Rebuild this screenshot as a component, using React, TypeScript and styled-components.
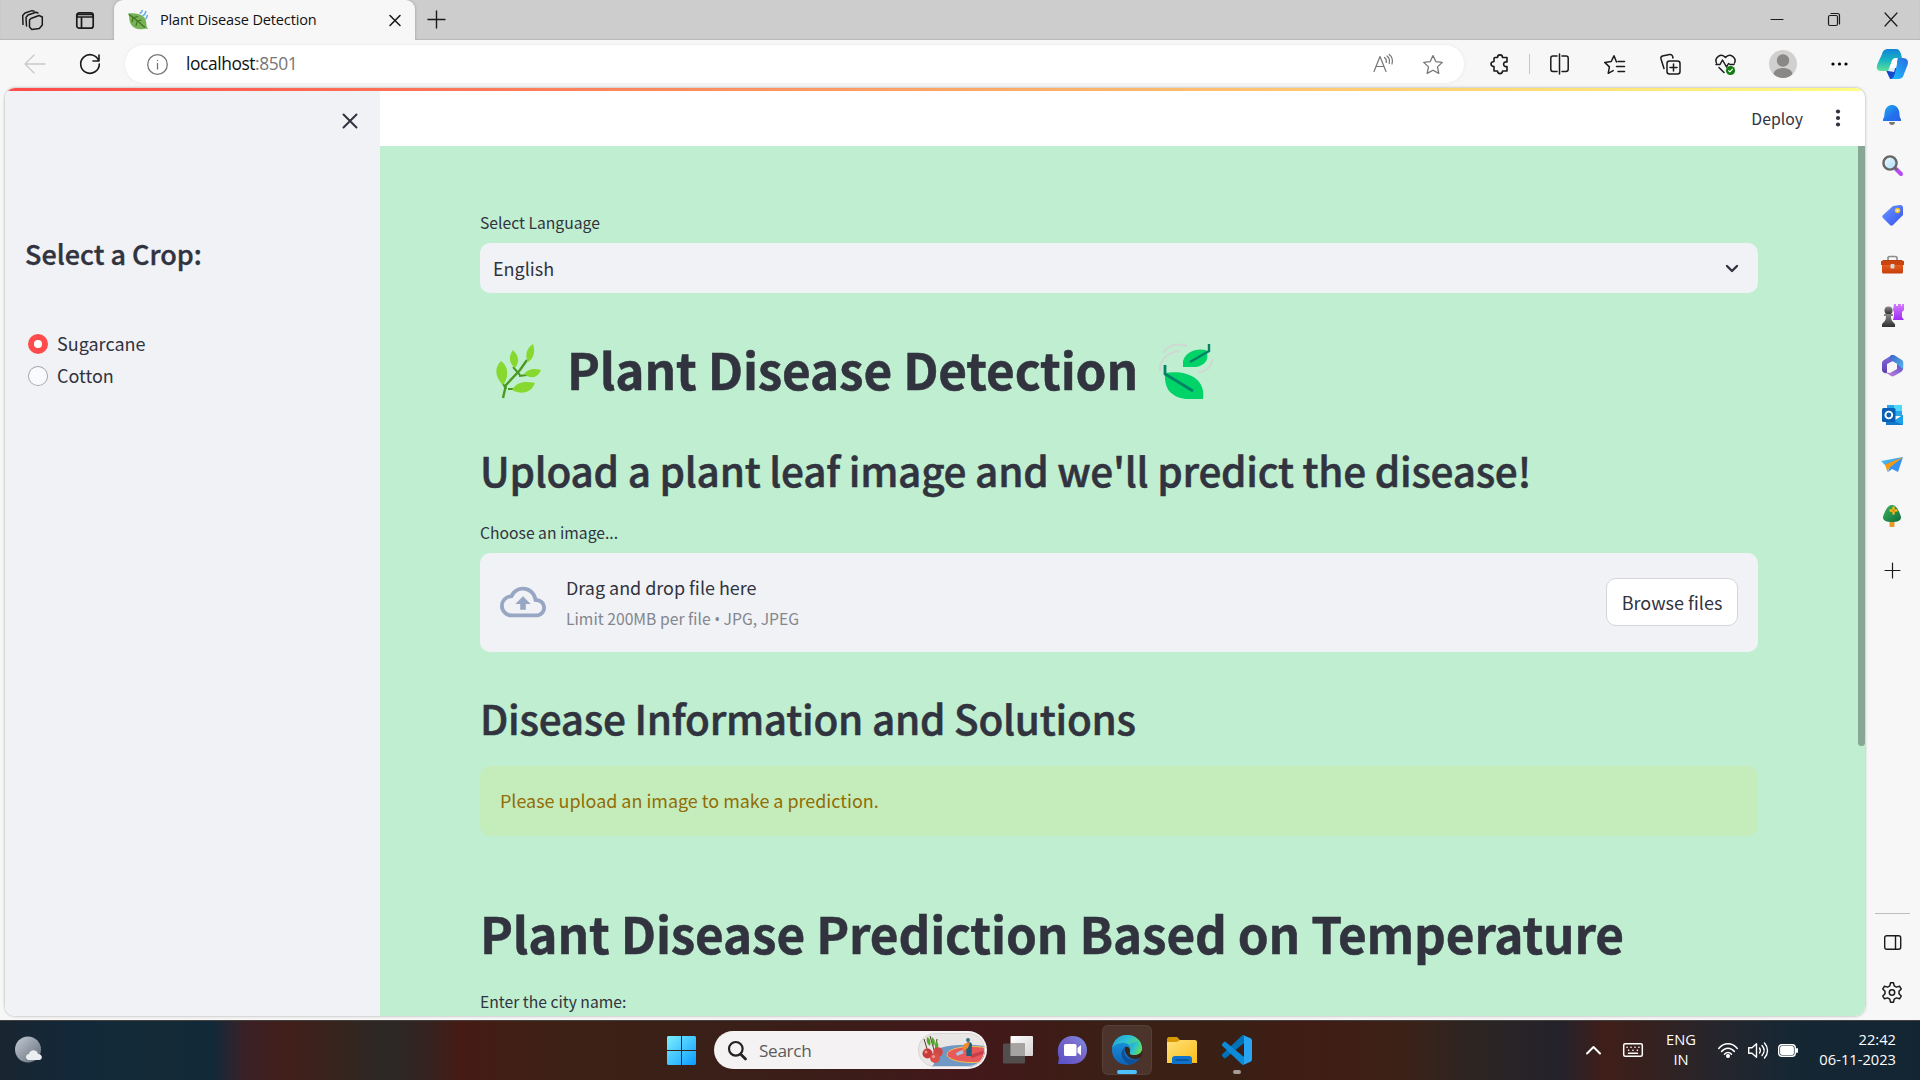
import React from "react";
import styled, { createGlobalStyle } from "styled-components";

const page = `"Noto Sans CJK SC", "Noto Sans CJK JP", sans-serif`;
const system = `"Open Sans", "Noto Sans", sans-serif`;
const ink = "#31333f";

const Global = createGlobalStyle`
  *, *::before, *::after { box-sizing: border-box; }
  html, body { margin: 0; padding: 0; overflow: hidden; }
  h1, h2, p { margin: 0; }
  svg { display: block; flex: none; overflow: visible; }
`;

const Desktop = styled.div`
  width: 1920px;
  height: 1080px;
  display: flex;
  flex-direction: column;
  overflow: hidden;
  background: #f7f7f7;
  font-family: ${system};
  color: #1b1b1b;
`;

/* ---------- browser chrome ---------- */
const TabStrip = styled.header`
  height: 40px;
  flex: none;
  display: flex;
  background: #cdcdcd;
  box-shadow: inset 0 -1px 1px #b9b9b9;
`;
const Slot = styled.div<{ $w: number; $up?: number }>`
  width: ${(p) => p.$w}px;
  flex: none;
  display: flex;
  align-items: center;
  justify-content: center;
  padding-bottom: ${(p) => p.$up || 0}px;
`;
const Tab = styled.div`
  width: 301px;
  flex: none;
  display: flex;
  align-items: center;
  padding: 0 11px 1px 14px;
  background: #f7f7f7;
  border-radius: 9px 9px 0 0;
  box-shadow: 0 0 3px rgba(0, 0, 0, 0.25);
  clip-path: inset(0 -4px 0 -4px);
`;
const TabTitle = styled.span`
  flex: 1;
  margin-left: 12px;
  font-size: 14.5px;
  letter-spacing: -0.14px;
  line-height: 20px;
  white-space: nowrap;
  color: #111;
`;
const Spacer = styled.div`
  flex: 1;
`;
const Toolbar = styled.div`
  height: 48px;
  flex: none;
  display: flex;
  align-items: center;
`;
const Omnibox = styled.div`
  width: 1339px;
  height: 38px;
  flex: none;
  display: flex;
  align-items: center;
  padding-left: 22px;
  margin-right: 8px;
  border-radius: 19px;
  background: #fff;
  box-shadow: 0 0 4px rgba(0, 0, 0, 0.06);
`;
const Url = styled.span`
  margin-left: 18px;
  padding-bottom: 2px;
  font-size: 17.4px;
  letter-spacing: -0.42px;
  line-height: 24px;
  color: #111;
  span { color: #767676; }
`;
const Divider = styled.div`
  width: 1px;
  height: 20px;
  background: #c8c8c8;
`;

/* ---------- body ---------- */
const Body = styled.div`
  height: 932px;
  flex: none;
  display: flex;
`;
const FrameShadow = styled.div`
  flex: none;
  width: 1860px;
  height: 928px;
  margin-left: 5px;
  border-radius: 10px;
  box-shadow: 0 0 3px rgba(0, 0, 0, 0.35);
`;
const Frame = styled.div`
  height: 928px;
  display: flex;
  flex-direction: column;
  overflow: hidden;
  border-radius: 10px;
  background: #fff;
  font-family: ${page};
  color: ${ink};
`;
const Rainbow = styled.div`
  height: 3px;
  flex: none;
  background: linear-gradient(90deg, #ff4b4b, #fffd80);
`;
const View = styled.div`
  flex: 1;
  min-height: 0;
  display: flex;
`;
const Sidebar = styled.aside`
  width: 375px;
  flex: none;
  display: flex;
  flex-direction: column;
  background: #f0f2f6;
`;
const SideTop = styled.div`
  height: 59px;
  display: flex;
  justify-content: flex-end;
  align-items: center;
  padding-right: 22px;
`;
const SideBody = styled.div`
  padding: 84px 20px 0 20px;
  display: flex;
  flex-direction: column;
`;
const SideTitle = styled.h2`
  font-size: 27px;
  font-weight: 500;
  line-height: 40px;
  margin-bottom: 54px;
  white-space: nowrap;
  -webkit-text-stroke: 0.35px ${ink};
`;
const RadioRow = styled.label`
  height: 32px;
  display: flex;
  align-items: center;
  gap: 9px;
  padding-left: 3px;
  font-size: 18px;
  line-height: 28px;
  span:last-child { padding-bottom: 2px; }
`;
const Radio = styled.span<{ $on?: boolean }>`
  width: 20px;
  height: 20px;
  border-radius: 50%;
  display: grid;
  place-items: center;
  background: ${(p) => (p.$on ? "#ff4b4b" : "#a0a2ab")};
  &::after {
    content: "";
    border-radius: 50%;
    width: ${(p) => (p.$on ? 7.5 : 17.5)}px;
    height: ${(p) => (p.$on ? 7.5 : 17.5)}px;
    background: ${(p) => (p.$on ? "#fff" : "#f9fafc")};
  }
`;
const Main = styled.main`
  flex: 1;
  min-width: 0;
  display: flex;
  flex-direction: column;
  background: #c0eed0;
`;
const Header = styled.div`
  height: 55px;
  flex: none;
  display: flex;
  justify-content: flex-end;
  align-items: center;
  padding: 0 22px 1px 0;
  background: #fff;
  font-size: 15.8px;
  svg { margin-left: 30px; }
`;
const Scroll = styled.div`
  flex: 1;
  min-height: 0;
  display: flex;
  justify-content: space-between;
  overflow: hidden;
`;
const Column = styled.div`
  width: 1278px;
  margin-left: 100px;
  padding-top: 62px;
  display: flex;
  flex-direction: column;
`;
const Thumb = styled.div`
  width: 7px;
  height: 600px;
  background: #87a694;
  border-radius: 0 0 4px 4px;
`;
const Label = styled.div<{ $top?: number }>`
  flex: none;
  height: 30px;
  margin: ${(p) => p.$top || 0}px 0 5px;
  font-size: 15.7px;
  line-height: 30px;
`;
const Select = styled.div`
  flex: none;
  height: 50px;
  display: flex;
  align-items: center;
  justify-content: space-between;
  padding: 0 17px 1px 13px;
  border-radius: 10px;
  background: #f0f2f6;
  font-size: 18px;
`;
const H1 = styled.h1<{ $top: number }>`
  flex: none;
  display: flex;
  align-items: center;
  height: 60px;
  margin-top: ${(p) => p.$top}px;
  font-size: 49.5px;
  font-weight: 700;
  line-height: 56px;
  letter-spacing: -0.16px;
  white-space: nowrap;
  -webkit-text-stroke: 0.5px ${ink};
`;
const HerbBox = styled.span`
  width: 61px;
  display: flex;
  justify-content: flex-end;
`;
const H1Text = styled.span<{ $inset?: boolean }>`
  margin: ${(p) => (p.$inset ? "0 21px 0 26px" : "0")};
  padding-bottom: 4px;
`;
const H2 = styled.h2<{ $top: number }>`
  flex: none;
  height: 60px;
  margin-top: ${(p) => p.$top}px;
  font-size: 40.5px;
  font-weight: 500;
  line-height: 56px;
  letter-spacing: -0.26px;
  white-space: nowrap;
  -webkit-text-stroke: 0.55px ${ink};
`;
const Uploader = styled.div`
  flex: none;
  height: 99px;
  display: flex;
  align-items: center;
  padding: 0 20px 2px;
  border-radius: 10px;
  background: #f0f2f6;
`;
const UploadText = styled.div`
  flex: 1;
  margin-left: 20px;
  padding-top: 2px;
  font-size: 17.95px;
  line-height: 32px;
  small {
    display: block;
    font-size: 15.72px;
    line-height: 31px;
    color: #84868e;
  }
`;
const Bullet = styled.span`
  font-family: "Open Sans", sans-serif;
`;
const Button = styled.button`
  width: 132px;
  height: 48px;
  padding: 0;
  border: 1px solid #d5d6d9;
  border-radius: 10px;
  background: #fff;
  font: 18px ${page};
  line-height: 44px;
  color: ${ink};
`;
const Alert = styled.div`
  flex: none;
  height: 70px;
  margin-top: 16px;
  padding: 0 20px;
  border-radius: 10px;
  background: #c5ecbb;
  color: #926c05;
  font-size: 17.93px;
  line-height: 69px;
`;

/* ---------- edge side rail ---------- */
const Rail = styled.nav`
  flex: 1;
  display: flex;
  flex-direction: column;
  align-items: center;
  padding: 2px 1px 6px 0;
`;
const RailItem = styled.div<{ $h?: number }>`
  flex: none;
  height: ${(p) => p.$h || 50.1}px;
  width: 50px;
  display: grid;
  place-items: center;
`;
const RailLine = styled.div`
  width: 35px;
  height: 1px;
  background: #bdbdbd;
`;

/* ---------- taskbar ---------- */
const Taskbar = styled.footer`
  height: 60px;
  flex: none;
  display: flex;
  align-items: center;
  padding-bottom: 1px;
  border-top: 1px solid #44413f;
  background: linear-gradient(
    90deg,
    #1a2530 0, #12293a 80px, #142b36 160px, #112a39 212px, #3a2026 245px,
    #421f1a 290px, #33261f 350px, #2c2826 390px, #332320 425px, #461b14 460px,
    #3e2015 540px, #3a2018 700px, #3c1c19 860px, #44181b 960px, #3f1a17 1030px,
    #3a2016 1120px, #3a1f15 1240px, #401c15 1300px, #3c2117 1400px, #2b2523 1480px,
    #24222b 1560px, #401e19 1605px, #35211f 1650px, #27252b 1710px, #162734 1790px, #122532 1920px
  );
  color: #fff;
`;
const Search = styled.div`
  width: 273px;
  height: 38px;
  margin: 0 16px 0 18px;
  flex: none;
  display: flex;
  align-items: center;
  padding: 0 2px 0 14px;
  border-radius: 19px;
  background: #f4f2f2;
  font-size: 17.2px;
  letter-spacing: -0.35px;
  color: #5b5b5b;
  span { flex: 1; margin-left: 13px; }
`;
const TaskView = styled.div`
  width: 30px;
  margin-right: 14px;
  flex: none;
`;
const AppTile = styled.div<{ $active?: boolean }>`
  width: 50px;
  height: 50px;
  margin-right: 5px;
  flex: none;
  display: grid;
  place-items: center;
  position: relative;
  border-radius: 6px;
  background: ${(p) => (p.$active ? "rgba(255,255,255,.09)" : "none")};
  box-shadow: ${(p) => (p.$active ? "inset 0 0 0 1px rgba(255,255,255,.06)" : "none")};
`;
const Mark = styled.i<{ $on?: boolean }>`
  position: absolute;
  bottom: 1px;
  left: 50%;
  transform: translateX(-50%);
  width: ${(p) => (p.$on ? 20 : 8)}px;
  height: 4px;
  border-radius: 2px;
  background: ${(p) => (p.$on ? "#4cc2ff" : "#a89b96")};
`;
const Stack = styled.div<{ $align: string; $w: number }>`
  width: ${(p) => p.$w}px;
  flex: none;
  padding-bottom: 2px;
  text-align: ${(p) => p.$align};
  font-size: 14.7px;
  line-height: 20px;
  white-space: nowrap;
`;

type IconProps = { w: number; h?: number; box?: string; sw?: number; color?: string; children: React.ReactNode };
const Line = ({ w, h, box, sw = 1.4, color = "#1b1b1b", children }: IconProps) => (
  <svg width={w} height={h || w} viewBox={box || `0 0 ${w} ${h || w}`} fill="none" stroke={color} strokeWidth={sw} strokeLinecap="round" strokeLinejoin="round">
    {children}
  </svg>
);
const Art = ({ w, h, box, children }: IconProps) => (
  <svg width={w} height={h || w} viewBox={box || `0 0 ${w} ${h || w}`}>{children}</svg>
);

const Defs = styled.svg`
  position: absolute;
`;
const Gradients = () => (
  <Defs width="0" height="0">
    <defs>
      <linearGradient id="bell" x1="0" y1="0" x2="1" y2="1"><stop stopColor="#1fb0ea" /><stop offset=".6" stopColor="#2270ee" /><stop offset="1" stopColor="#2a62e6" /></linearGradient>
      <linearGradient id="tag" x1="0" y1="0" x2="1" y2="1"><stop stopColor="#6d9bff" /><stop offset=".5" stopColor="#4f75fb" /><stop offset="1" stopColor="#3451e0" /></linearGradient>
      <linearGradient id="violet" x1="0" y1="0" x2="0" y2="1"><stop stopColor="#d37bff" /><stop offset="1" stopColor="#9d2cf5" /></linearGradient>
      <linearGradient id="grey" x1="0" y1="0" x2="0" y2="1"><stop stopColor="#8a8a8a" /><stop offset="1" stopColor="#2f2f2f" /></linearGradient>
      <linearGradient id="lens" x1="0" y1="0" x2="1" y2="1"><stop stopColor="#f1fbff" /><stop offset="1" stopColor="#a9dcfa" /></linearGradient>
      <linearGradient id="box" x1="0" y1="0" x2="0" y2="1"><stop stopColor="#b8380a" /><stop offset=".4" stopColor="#e65b1c" /><stop offset="1" stopColor="#c33f0f" /></linearGradient>
      <linearGradient id="plane" x1="0" y1="0" x2="1" y2="1"><stop stopColor="#55d4f5" /><stop offset="1" stopColor="#1f6fe8" /></linearGradient>
      <linearGradient id="tree" x1="0" y1="0" x2="1" y2="1"><stop stopColor="#3eb65a" /><stop offset="1" stopColor="#0d6b3c" /></linearGradient>
      <linearGradient id="cpA" x1="0" y1="0" x2="0" y2="1"><stop stopColor="#1183d8" /><stop offset=".5" stopColor="#17b4c0" /><stop offset="1" stopColor="#5fe09a" /></linearGradient>
      <linearGradient id="cpB" x1="1" y1="0" x2="0" y2="1"><stop stopColor="#2a6be0" /><stop offset="1" stopColor="#1cc2ff" /></linearGradient>
      <linearGradient id="cpC" x1="0" y1="0" x2="1" y2="1"><stop stopColor="#0b3fb8" /><stop offset="1" stopColor="#1b57e0" /></linearGradient>
      <linearGradient id="win" x1="0" y1="0" x2="1" y2="1"><stop stopColor="#7df0ff" /><stop offset="1" stopColor="#0a9bff" /></linearGradient>
      <linearGradient id="chat" x1="1" y1="0" x2="0" y2="1"><stop stopColor="#7a92ea" /><stop offset=".4" stopColor="#7868c8" /><stop offset="1" stopColor="#5650c8" /></linearGradient>
      <linearGradient id="edgeTop" x1="0" y1="0" x2="1" y2=".6"><stop stopColor="#1e9be0" /><stop offset=".5" stopColor="#2fc3cf" /><stop offset="1" stopColor="#66e04c" /></linearGradient>
      <linearGradient id="edgeLow" x1="0" y1="0" x2="0" y2="1"><stop stopColor="#1b9de2" /><stop offset="1" stopColor="#0f62b8" /></linearGradient>
      <linearGradient id="folder" x1="0" y1="0" x2="1" y2="1"><stop stopColor="#ffe07a" /><stop offset="1" stopColor="#fbbf18" /></linearGradient>
      <linearGradient id="tvF" x1="0" y1="0" x2="1" y2="1"><stop stopColor="#fff" /><stop offset="1" stopColor="#d5d3d2" /></linearGradient>
      <linearGradient id="moon" x1="0" y1="0" x2="1" y2="1"><stop stopColor="#c3cbd5" /><stop offset="1" stopColor="#626b77" /></linearGradient>
      <linearGradient id="m1" x1="0" y1="0" x2="0" y2="1"><stop stopColor="#8a6be0" /><stop offset="1" stopColor="#5a3fae" /></linearGradient>
      <linearGradient id="m2" x1="0" y1="0" x2="1" y2="1"><stop stopColor="#3a5fc6" /><stop offset="1" stopColor="#58bdf0" /></linearGradient>
      <linearGradient id="m3" x1="1" y1="0" x2="0" y2="1"><stop stopColor="#5950cc" /><stop offset="1" stopColor="#c884dc" /></linearGradient>
    </defs>
  </Defs>
);

const Favicon = () => (
  <Art w={20}>
    <path d="M0 3.500C4 3 7 3 10 4c4 1 7 3 8 7 .5 3 0 5 2 8-3-1-5 .5-8 .2C6 19 2 15 1.500 10 1.300 7.500 1 5.500 0 3.500z" fill="#77b255" />
    <path d="M1 4.500c6 4 10 8 16 13M6 7.500l4-1M5 8l-1 4M9.500 11l4-1M9 11.500L8 16" stroke="#3e721d" strokeWidth="1.100" fill="none" />
    <path d="M11.500 3.500c1.500-.5 2.500-1.500 3-3.500M14.500 6c2-1 3-2.500 3.500-5M17.500 9c1-1 1.600-2 2-4" stroke="#5dadec" strokeWidth="1.400" fill="none" />
  </Art>
);

const Herb = () => (
  <Art w={45} h={55}>
    <path d="M7 54l3-13 14-15 7-10" stroke="#4a9a22" strokeWidth="2.4" fill="none" />
    <path d="M10 45L5 36M12 45h6M24 31l-7-8M23 32l8-1" stroke="#4a9a22" strokeWidth="2" fill="none" />
    <path d="M37 0c3 8 0 15-5 18-4-8 0-15 5-18zM17 6c7 7 6 13 2 18-6-5-7-11-2-18zM5 17c8 6 8 16 2 24C-1 33-2 24 5 17zM28 30c4-5 10-6 17-4-3 7-9 10-17 4zM16 46c5-9 14-9 23-7-4 10-13 12-23 7z" fill="#87d82f" />
  </Art>
);
const Leaves = () => (
  <Art w={54} h={55}>
    <path d="M4 9C10 0 19-1 28 2M1 27C0 17 8 8 21 7M53 15c0 7-5 13-14 13" stroke="#cfd8d2" strokeWidth="2" fill="none" />
    <path d="M24 23V17C27 8 36 4 47 6c4 9-1 17-13 17z" fill="#00d468" />
    <path d="M50 0v7L31 18" stroke="#028266" strokeWidth="2.4" fill="none" />
    <path d="M6 29c20-3 41 4 38 26H27C11 53 5 44 6 29z" fill="#00d468" />
    <path d="M6 21v9l28 17" stroke="#028266" strokeWidth="2.8" fill="none" />
  </Art>
);
const Cloud = () => (
  <svg width="46" height="46" viewBox="0 0 24 24" fill="#97a6c3">
    <path d="M19.35 10.04A7.49 7.49 0 0012 4C9.11 4 6.6 5.64 5.35 8.04A5.994 5.994 0 000 14c0 3.31 2.69 6 6 6h13c2.76 0 5-2.24 5-5 0-2.64-2.05-4.78-4.65-4.96zM19 18H6c-2.21 0-4-1.79-4-4 0-2.05 1.53-3.76 3.56-3.97l1.07-.11.5-.95A5.469 5.469 0 0112 6c2.62 0 4.88 1.86 5.39 4.43l.3 1.5 1.53.11A2.98 2.98 0 0122 15c0 1.65-1.35 3-3 3zM8 13h2.55v3h2.9v-3H16l-4-4z" />
  </svg>
);

const Copilot = () => (
  <Art w={31} h={30}>
    <path d="M8 19l5 11h6l4-11z" fill="url(#cpC)" />
    <path d="M12 0h7c3 0 4 2 5 5l1 4h-6c-3 0-4 2-5 5l-2 7c-.5 1-1 1-2 1H4c-4 0-5-3-3.500-7L5 5c1-4 3-5 7-5z" fill="url(#cpA)" />
    <path d="M20 9h6c4 0 6 3 4.500 7L27 25c-1 4-3 5-7 5h-6c3-1 3-3 4-6l2-9z" fill="url(#cpB)" />
    <path d="M16 10l5-1-4 14-6-1z" fill="#fff" opacity=".9" />
  </Art>
);

const railIcons = [
  <Art w={20}><path d="M1 14c2-2 1-5 2-8 1-4 4-6 7-6s6 2 7 6c1 3 0 6 2 8v2H1z" fill="url(#bell)" /><path d="M7 17h6c0 4-6 4-6 0z" fill="#777" /></Art>,
  <Art w={21}><path d="M14 14l5 5" stroke="#b64bf5" strokeWidth="4" strokeLinecap="round" /><path d="M12 12l3 3" stroke="#666" strokeWidth="2" /><circle cx="8" cy="8" r="6.600" fill="url(#lens)" stroke="#666" strokeWidth="2.400" /></Art>,
  <Art w={21}><path d="M11 1l7-1c2 0 3 1 3 3v7l-10 10c-1 1-2 1-3 0l-7-7c-1-1-1-2 0-3z" fill="url(#tag)" /><circle cx="15.500" cy="5.500" r="2" fill="#eef" stroke="#f3c21c" strokeWidth="1.600" /></Art>,
  <Art w={23} h={18}><path d="M7 5V2c0-1 1-1.500 2-1.500h5c1 0 2 .5 2 1.500v3" stroke="#8c8c8c" strokeWidth="1.600" fill="none" /><rect x="1" y="4" width="21" height="13.500" rx="1.500" fill="url(#box)" /><path d="M0 5h23v4H0z" fill="#c9440f" /><rect x="9.500" y="8" width="4" height="4.500" rx="1" fill="#d8d8d8" /></Art>,
  <Art w={23}><path d="M13 0h2v2h2V0h3v2h1V0h2v6l-2 2v5l2 3H12l1-4V8l-1-2z" fill="url(#violet)" /><circle cx="7.500" cy="6.500" r="4" fill="url(#grey)" /><path d="M3 10h9v2h-2c0 4 1 5 4 8v3H1v-3c3-3 4-4 4-8H3z" fill="url(#grey)" /></Art>,
  <Art w={21} h={22}><path d="M10 0L2 5c-1 .6-2 1.500-2 3v7c0 2 3 4 5 3V9l6-3z" fill="url(#m1)" /><path d="M9 0l3 0 8 5c1 1 1.300 2 1.300 3v6l-6 1V9L7 4z" fill="url(#m2)" /><path d="M21 14c0 1-1 2-2 3l-7 4c-1 .6-2 .6-3 0l-6-4 5 1 7-4V9z" fill="url(#m3)" /><path d="M10.600 6.800l3.700 2v4.400l-3.700 2.200-3.800-2.200V8.800z" fill="#f7f7f7" /></Art>,
  <Art w={21} h={21}><path d="M5 0h15v11H5z" fill="#28a8ea" /><path d="M12 0h8v6h-8z" fill="#50d9ff" /><path d="M4 11l8 5 9-6v10H4z" fill="#1379cf" /><path d="M12 16l9-6v10z" fill="#1fa1e8" /><rect y="3" width="13.500" height="14" rx="1.500" fill="#0a5fb4" /><circle cx="6.800" cy="10" r="3.400" fill="none" stroke="#fff" strokeWidth="1.900" /></Art>,
  <Art w={22} h={17}><path d="M0 4L22 0 7 11z" fill="url(#plane)" /><path d="M5 9L22 0 8 9l-1 6z" fill="#f09a16" /><path d="M9 9L22 0l-5 15-6-3-4 3z" fill="#3493f2" /><path d="M4 7.500L22 0 7.500 11.500 6.500 15z" fill="#f09a16" /></Art>,
  <Art w={18} h={22}><rect x="6.500" y="15" width="5" height="7" rx="1" fill="#e79a25" /><path d="M9 0c4 0 6 4 8 9 3 6-1 8-8 8s-11-2-8-8C3 4 5 0 9 0z" fill="url(#tree)" /><path d="M10.500 2.500v6M7.500 5.500h6" stroke="#f8b71e" strokeWidth="2.400" strokeLinecap="round" /><circle cx="10.500" cy="5.500" r="1" fill="#dd6a10" /></Art>,
];

const SearchArt = () => (
  <Art w={67} h={34}>
    <defs><clipPath id="pill"><rect width="67" height="34" rx="17" /></clipPath></defs>
    <g clipPath="url(#pill)">
      <rect width="67" height="34" fill="#e9e7e6" />
      <path d="M22 15c12-4 30-4 45-2v21H14c3-4 6-12 8-19z" fill="#6f99c4" />
      <ellipse cx="54" cy="21.500" rx="25" ry="8" fill="#e8595c" stroke="#f0c04a" strokeWidth="1" />
      <path d="M52 22l16-5v3l-14 5z" fill="#c43f49" />
      <path d="M48 12c0-4 6-4 6 0l-.5 11h-5z" fill="#1d6077" />
      <path d="M46 11l6-2-2 6-6 4z" fill="#f28a2c" /><circle cx="50" cy="7" r="2" fill="#3c6f80" />
      <path d="M38 20l6-3 2 3-7 3z" fill="#a8c4dc" />
      <path d="M6 6l4 13M12 3l4 14M19 6l-2 14" stroke="#57352a" strokeWidth="1" fill="none" />
      <path d="M9 4c4 2 4 6 3 9-3-2-4-5-3-9zM14 4c4 3 3 7 2 9-3-2-3-6-2-9zM18 8c3 2 3 6 1 9-3-3-2-6-1-9z" fill="#54a82c" />
      <circle cx="9.500" cy="20.500" r="5" fill="#c93b3b" /><circle cx="20" cy="19" r="4.800" fill="#d04844" /><circle cx="17" cy="25" r="5" fill="#d9504b" />
      <circle cx="8" cy="19" r="1.500" fill="#eb8b82" /><circle cx="15.500" cy="23.500" r="1.500" fill="#f09c90" />
    </g>
    <rect x=".5" y=".5" width="66" height="33" rx="16.500" fill="none" stroke="#d8d6d6" />
  </Art>
);

const EdgeLogo = () => (
  <Art w={30} h={30}>
    <circle cx="15" cy="15" r="15" fill="url(#edgeLow)" />
    <path d="M0 14C1 5 7 0 15 0c9 0 15 6 15 13 0 5-4 7-8 7-3 0-5-1-4-3 2-5-1-9-6-9C6 8 1 10 0 14z" fill="url(#edgeTop)" />
    <path d="M13 12c2-1 6 1 5 5-1 2 1 3 4 3 4 0 7-2 8-5 1 3 0 6-2 8-5 2-10 1-13-3-2-3-3-5-2-8z" fill="#3b2419" />
    <path d="M18 17c-1 2 1 3 4 3 4 0 8-2 8-7l-4-7-8 3c1 2 1 5 0 8z" fill="url(#edgeTop)" />
    <path d="M13 12c-2 6 0 10 5 12 4 1 8 0 10-1-3 5-7 6-11 6-5-2-9-8-7-13z" fill="#105097" />
  </Art>
);

export default function PlantDesktop() {
  return (
    <Desktop>
      <Global />
      <Gradients />
      <TabStrip>
        <Slot $w={65}>
          <Line w={21} h={20} sw={1.5}>
            <path d="M9 8.500l8-3 3.300 1.500v8l-3 3.500-7.500 1L7.500 17v-7zM4.500 16L4 7.500 6 5l8-2.800 2 .8M1 14.500L.7 5.500 3 3l7-2.400 2 .6" />
          </Line>
        </Slot>
        <Slot $w={40}>
          <Line w={18} h={17} sw={1.7}><rect x=".8" y=".8" width="16.400" height="15.400" rx="2.500" /><path d="M1 2.500h16v2.500H1zM5.500 5v11" /></Line>
        </Slot>
        <Slot $w={9} />
        <Tab>
          <Favicon />
          <TabTitle>Plant Disease Detection</TabTitle>
          <Slot $w={19}><Line w={10} sw={1.6}><path d="M0 .5l10 10M10 .5L0 10.500" /></Line></Slot>
        </Tab>
        <Slot $w={42} $up={1}><Line w={17} sw={1.4}><path d="M8.500 0v17M0 8.500h17" /></Line></Slot>
        <Spacer />
        <Slot $w={57} $up={2}><Line w={12} sw={1.2}><path d="M0 6.500h12" /></Line></Slot>
        <Slot $w={57} $up={1}><Line w={12} h={13} sw={1.2}><rect x=".5" y="2.500" width="9" height="10" rx="1.500" /><path d="M3 .5h6.500c1.500 0 2 1 2 2V11" /></Line></Slot>
        <Slot $w={58} $up={1}><Line w={12} h={13} sw={1.2}><path d="M0 0l12 13M12 0L0 13" /></Line></Slot>
      </TabStrip>

      <Toolbar>
        <Slot $w={70} $up={1}><Line w={20} h={18} sw={1.3} color="#c9c9c9"><path d="M20 9H0M9 0L0 9l9 9" /></Line></Slot>
        <Slot $w={40}><Line w={20} sw={1.6}><path d="M18.800 7A9.300 9.300 0 1019.300 10M19 1v6h-6" /></Line></Slot>
        <Slot $w={15} />
        <Omnibox>
          <Line w={21} sw={1.3} color="#767676"><circle cx="10.500" cy="10.500" r="9.800" /><path d="M10.500 9.500v5.500M10.500 6.300v.2" /></Line>
          <Url>localhost<span>:8501</span></Url>
          <Spacer />
          <Slot $w={49} $up={2}><Line w={19} h={18} sw={1.2} color="#767676"><path d="M0 17.500L6 2.500l6 15M2 12.500h8M10.500 3.500c1.700 1.300 2.200 3 1.700 5M13 2c2.300 1.800 3 4.300 2.200 7.500M15.300.5c3 2.500 3.700 6 2.700 9.500" /></Line></Slot>
          <Slot $w={50}><Line w={20} h={19} sw={1.3} color="#767676"><path d="M10 .6l2.800 6 6.500.8-4.800 4.500 1.300 6.500L10 15.200l-5.800 3.200 1.300-6.500L.7 7.400l6.500-.8z" /></Line></Slot>
          <Slot $w={6} />
        </Omnibox>
        <Slot $w={56} $up={1}>
          <Line w={18} h={20} sw={1.6}><path d="M4 3.500h2.500c0-3.500 5-3.500 5 0H16v4.500c-4.500-1-4.500 5.500 0 4.500v4.500h-4.500c0 3.500-5 3.500-5 0H3v-4.500c-4-.5-4-4.500 0-5V4.500c0-.6.4-1 1-1z" /></Line>
        </Slot>
        <Slot $w={3}><Divider /></Slot>
        <Slot $w={56}><Line w={19} h={20} sw={1.5}><path d="M9.500 0v20M7 2H3C1.500 2 .8 3 .8 4v11c0 1.500.8 2.500 2.200 2.500h4M12 2h4c1.500 0 2.200 1 2.200 2v11c0 1.500-.7 2.500-2.200 2.500h-4" /></Line></Slot>
        <Slot $w={55}><Line w={21} h={19} sw={1.5}><path d="M12.500 7L10 .8 7.200 6.500l-6.500.9 4.700 4.500-1.200 6.400 5-2.700M14 6.500h6.500M12.500 11.500h8M14 16.500h6.500" /></Line></Slot>
        <Slot $w={56}><Line w={21} h={21} sw={1.5}><rect x="7" y="7" width="13" height="13" rx="2.500" /><path d="M13.500 10v7M10 13.500h7M4 14.500L1 5C.6 3.500 1 2.500 2.500 2l7-1.500c1.500-.3 2.500.3 3 1.500l.5 2" /></Line></Slot>
        <Slot $w={55}>
          <Line w={21} h={21} sw={1.5}><path d="M1.500 9C-1 4 6-2 10.500 3.500 15-2 22 4 19.500 9M1 10.500h4L7.500 6l4 7 2-3.500 1.500 1h4M4 13.500l5 5" /><circle cx="15.500" cy="16.500" r="4.600" fill="#107c10" stroke="none" /><path d="M13.600 16.600l1.300 1.300 2.600-2.800" stroke="#fff" strokeWidth="1.100" /></Line>
        </Slot>
        <Slot $w={60}>
          <Art w={28}><circle cx="14" cy="14" r="14" fill="#d2d0ce" /><circle cx="14" cy="10.500" r="6.200" fill="#8a8886" /><path d="M4.500 24c1-8 18-8 19 0-5 5.300-14 5.300-19 0z" fill="#8a8886" /></Art>
        </Slot>
        <Slot $w={52}><Art w={17} h={4}><circle cx="2" cy="2" r="1.600" /><circle cx="8.500" cy="2" r="1.600" /><circle cx="15" cy="2" r="1.600" /></Art></Slot>
        <Slot $w={55}><Copilot /></Slot>
      </Toolbar>

      <Body>
        <FrameShadow>
          <Frame>
            <Rainbow />
            <View>
              <Sidebar>
                <SideTop><Line w={16} sw={2} color={ink}><path d="M1.500 1.500l13 13M14.500 1.500l-13 13" /></Line></SideTop>
                <SideBody>
                  <SideTitle>Select a Crop:</SideTitle>
                  <RadioRow><Radio $on /><span>Sugarcane</span></RadioRow>
                  <RadioRow><Radio /><span>Cotton</span></RadioRow>
                </SideBody>
              </Sidebar>
              <Main>
                <Header>
                  Deploy
                  <Art w={10} h={18}><g fill={ink}><circle cx="5" cy="2.500" r="2.100" /><circle cx="5" cy="9" r="2.100" /><circle cx="5" cy="15.500" r="2.100" /></g></Art>
                </Header>
                <Scroll>
                  <Column>
                    <Label>Select Language</Label>
                    <Select>English<Line w={18} h={18} sw={2.4} color={ink}><path d="M4 7l5 5 5-5" /></Line></Select>
                    <H1 $top={48}>
                      <HerbBox><Herb /></HerbBox>
                      <H1Text $inset>Plant Disease Detection</H1Text>
                      <Leaves />
                    </H1>
                    <H2 $top={41}>Upload a plant leaf image and we'll predict the disease!</H2>
                    <Label $top={16}>Choose an image...</Label>
                    <Uploader>
                      <Cloud />
                      <UploadText>Drag and drop file here<small>Limit 200MB per file <Bullet>•</Bullet> JPG, JPEG</small></UploadText>
                      <Button>Browse files</Button>
                    </Uploader>
                    <H2 $top={38}>Disease Information and Solutions</H2>
                    <Alert>Please upload an image to make a prediction.</Alert>
                    <H1 $top={69}><H1Text>Plant Disease Prediction Based on Temperature</H1Text></H1>
                    <Label $top={22}>Enter the city name:</Label>
                  </Column>
                  <Thumb />
                </Scroll>
              </Main>
            </View>
          </Frame>
        </FrameShadow>
        <Rail>
          {railIcons.map((icon, i) => <RailItem key={i}>{icon}</RailItem>)}
          <RailItem $h={59}><Line w={15} sw={1.2}><path d="M7.500 0v15M0 7.500h15" /></Line></RailItem>
          <Spacer />
          <RailLine />
          <RailItem $h={56}><Line w={17} h={15} sw={1.4}><rect x=".7" y=".7" width="16" height="13.600" rx="2" /><path d="M11.500 1v13" /></Line></RailItem>
          <RailItem $h={44}>
            <Line w={20} h={21} sw={1.5}><path d="M8.500.8h3l.7 3 2.300 1.300 3-.9 1.700 2.700-2.200 2.300v2.600l2.200 2.300-1.700 2.700-3-.9-2.300 1.300-.7 3h-3l-.7-3-2.300-1.300-3 .9L.8 14.100 3 11.800V9.200L.8 6.900l1.700-2.700 3 .9 2.300-1.300z" /><circle cx="10" cy="10.500" r="2.700" /></Line>
          </RailItem>
        </Rail>
      </Body>

      <Taskbar>
        <Slot $w={58}><Art w={28} h={28}><circle cx="13" cy="13.500" r="13" fill="url(#moon)" /><path d="M14 24c-4 0-4-6 0-6 1-5 8-5 9 0 5 0 5 6 1 6z" fill="#eceff2" /></Art></Slot>
        <Slot $w={609} />
        <Art w={29}><g fill="url(#win)"><path d="M1 0h13v14H0V1zM15 0h13l1 1v13H15zM0 15h14v14H1l-1-1zM15 15h14v13l-1 1H15z" /></g></Art>
        <Search>
          <Line w={18} h={19} sw={2.2} color="#222"><circle cx="7.800" cy="7.800" r="6.800" /><path d="M13 13.500l4.500 4.500" strokeWidth="2.800" /></Line>
          <span>Search</span>
          <SearchArt />
        </Search>
        <TaskView>
          <Art w={30} h={28}><rect x="7.500" width="22.500" height="20" rx="1" fill="url(#tvF)" /><rect y="7.500" width="22" height="20" rx="1" fill="#555" opacity=".88" /><path d="M7.500 7.500H22V20H7.500z" fill="#a5a4a3" /></Art>
        </TaskView>
        <AppTile>
          <Art w={29} h={28}><path d="M14.500 0C23 0 29 6 29 14s-6 14-14.500 14H0l1-6C-3 10 4 0 14.500 0z" fill="url(#chat)" /><rect x="6" y="8" width="12.500" height="12" rx="1.500" fill="#fff" /><path d="M19.500 12l3.500-3v10.500l-3.500-3z" fill="#fff" /></Art>
        </AppTile>
        <AppTile $active><EdgeLogo /><Mark $on /></AppTile>
        <AppTile>
          <Art w={30} h={27}><path d="M0 2c0-1 1-2 2-2h8l3 3v5H0z" fill="#d79a06" /><path d="M0 5h10l3-2h15c1 0 2 1 2 2v21H0z" fill="url(#folder)" /><path d="M5 27v-5c0-2 1-3 3-3h14c2 0 3 1 3 3v5z" fill="#0f73cc" /><path d="M8.500 23h13" stroke="#0a4d92" strokeWidth="1.500" /></Art>
        </AppTile>
        <AppTile>
          <Art w={30}><path d="M0 21l2 2c.6.500 1 .5 1.700 0L22 8V1c0-1-1-1.300-2-.5L.5 19c-.6.600-.8 1.300-.5 2z" fill="#0072b8" /><path d="M0 9l2-2c.6-.500 1-.5 1.700 0L22 22v7c0 1-1 1.300-2 .5L.5 11c-.6-.600-.8-1.300-.5-2z" fill="#0b8bd8" /><path d="M21 0l7 3c1.500.6 2 1.500 2 3v18c0 1.500-.5 2.400-2 3l-7 3c1-.5 1-1 1-2V2c0-1 0-1.500-1-2z" fill="#27a4f2" /></Art>
          <Mark />
        </AppTile>
        <Spacer />
        <Slot $w={50}><Line w={13} h={8} sw={2} color="#fff"><path d="M0 7.500L6.500 1 13 7.500" /></Line></Slot>
        <Slot $w={30}><Line w={20} h={14} sw={1.5} color="#fff"><rect x=".7" y=".7" width="18.600" height="12.600" rx="1.500" /><path d="M4 4.200h.2M7.900 4.200h.2M11.900 4.200h.2M15.800 4.200h.2M5.500 7.200h.2M9.900 7.200h.2M14.300 7.200h.2M5.500 10.200h9" /></Line></Slot>
        <Slot $w={5} />
        <Stack $align="center" $w={56}>ENG<br />IN</Stack>
        <Slot $w={9} />
        <Slot $w={20}><Line w={20} h={15} sw={1.5} color="#fff"><path d="M.7 5.500C6-.8 14-.8 19.300 5.500M3.600 8.500c3.500-4.500 9.300-4.500 12.800 0M6.500 11.300c2-2.300 5-2.300 7 0" /><circle cx="10" cy="13" r="1.300" fill="#fff" /></Line></Slot>
        <Slot $w={10} />
        <Slot $w={20}><Line w={20} h={17} sw={1.4} color="#fff"><path d="M.7 5.700h3.300l4.500-4v13.600l-4.500-4H.7zM11.500 6c1 1.500 1 3.500 0 5M14 3.500c2.600 3 2.600 7 0 10M16.500 1c4 4.500 4 10.500 0 15" /></Line></Slot>
        <Slot $w={10} />
        <Slot $w={20}><Line w={20} h={13} sw={1.4} color="#fff"><rect x=".7" y=".7" width="16.600" height="11.600" rx="3" /><rect x="2.800" y="2.800" width="12.400" height="7.400" rx="1" fill="#fff" /><path d="M19 5v3" strokeWidth="2" /></Line></Slot>
        <Stack $align="right" $w={98}>22:42<br />06-11-2023</Stack>
        <Slot $w={24} />
      </Taskbar>
    </Desktop>
  );
}
